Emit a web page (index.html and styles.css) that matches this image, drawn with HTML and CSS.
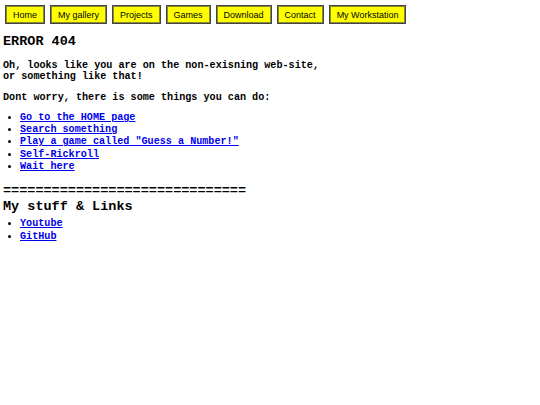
FILE: index.html
```html
<!DOCTYPE html>
<html>
<head>
<meta charset="utf-8">
<link rel="stylesheet" href="styles.css">
</head>
<body>
<nav class="menu">
  <a class="btn" href="#">Home</a>
  <a class="btn" href="#">My gallery</a>
  <a class="btn" href="#">Projects</a>
  <a class="btn" href="#">Games</a>
  <a class="btn" href="#">Download</a>
  <a class="btn" href="#">Contact</a>
  <a class="btn" href="#">My Workstation</a>
</nav>
<main class="content">
  <h1 class="title">ERROR 404</h1>
  <p class="text">Oh, looks like you are on the non-exisning web-site,<br>or something like that!</p>
  <p class="text">Dont worry, there is some things you can do:</p>
  <ul class="list">
    <li><a href="#">Go to the HOME page</a></li>
    <li><a href="#">Search something</a></li>
    <li><a href="#">Play a game called "Guess a Number!"</a></li>
    <li><a href="#">Self-Rickroll</a></li>
    <li><a href="#">Wait here</a></li>
  </ul>
  <div class="sep">==============================</div>
  <h2 class="title">My stuff &amp; Links</h2>
  <ul class="list list-tight">
    <li><a href="#">Youtube</a></li>
    <li><a href="#">GitHub</a></li>
  </ul>
</main>
</body>
</html>
```
FILE: styles.css
```css
html, body {
  margin: 0;
  padding: 0;
  background: #ffffff;
}
body {
  font-family: "Liberation Mono", "Courier New", monospace;
  font-weight: bold;
  font-size: 10.13px;
  color: #000;
}
.menu {
  display: flex;
  gap: 5px;
  padding: 5px 5px 0 5px;
}
.btn {
  display: flex;
  align-items: center;
  justify-content: center;
  box-sizing: border-box;
  height: 19px;
  padding: 0 7px;
  background: #ffff00;
  border: 1px solid #444;
  box-shadow: inset 0 0 0 1px #8a8a30;
  color: #000;
  text-decoration: none;
  font-family: "Liberation Sans", Arial, sans-serif;
  font-weight: normal;
  font-size: 9px;
}
.content {
  padding: 0 3px;
}
.title {
  font-size: 13.5px;
  line-height: 16px;
  margin: 10px 0 0 0;
}
h2.title {
  margin-top: 2px;
}
.text {
  margin: 10px 0 0 0;
  line-height: 11px;
}
.list {
  margin: 9px 0 0 0;
  padding-left: 17px;
  line-height: 12.2px;
}
.list-tight {
  margin-top: 3px;
  line-height: 12.6px;
}
.list a {
  color: #0000ee;
}
.sep {
  margin-top: 12px;
  font-size: 13.5px;
  line-height: 12px;
}
```
